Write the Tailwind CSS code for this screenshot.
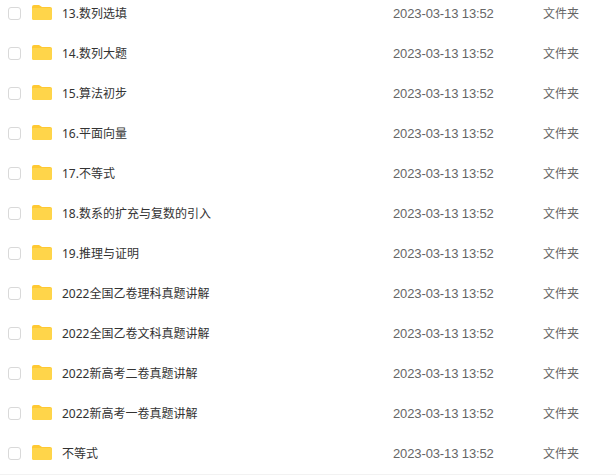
<!DOCTYPE html>
<html lang="zh">
  <head>
    <meta charset="UTF-8" />
    <title>文件列表</title>
    <script src="https://cdn.jsdelivr.net/npm/@tailwindcss/browser@4"></script>
  </head>
  <body class="bg-white overflow-hidden h-[475px] font-['Noto_Sans','Noto_Sans_CJK_SC',sans-serif]">
    <ul class="-mt-[7px] w-[616px]">
      <li class="h-10 flex items-center">
        <span class="ml-2 w-[13px] h-[13px] border border-[#d9d9d9] rounded-[3px] bg-white"></span>
        <svg class="ml-[11px] mb-px w-5 h-[15px]" viewBox="0 0 20 15"><path d="M0 2a2 2 0 0 1 2-2h5l3 2h8a2 2 0 0 1 2 2v9a2 2 0 0 1-2 2H2a2 2 0 0 1-2-2z" fill="#ffc933"/><path d="M0 4a1 1 0 0 1 1-1h17.500a1.500 1.500 0 0 1 1.500 1.500v8.500a2 2 0 0 1-2 2H2a2 2 0 0 1-2-2z" fill="#ffd54a"/></svg>
        <span class="ml-[10px] pt-px w-[331px] text-xs text-[#333]">13.数列选填</span>
        <span class="w-[150px] pt-px text-[13px] tracking-[-0.12px] text-[#666] font-['Liberation_Sans',sans-serif]">2023-03-13 13:52</span>
        <span class="pt-px text-xs text-[#666]">文件夹</span>
      </li>
      <li class="h-10 flex items-center">
        <span class="ml-2 w-[13px] h-[13px] border border-[#d9d9d9] rounded-[3px] bg-white"></span>
        <svg class="ml-[11px] mb-px w-5 h-[15px]" viewBox="0 0 20 15"><path d="M0 2a2 2 0 0 1 2-2h5l3 2h8a2 2 0 0 1 2 2v9a2 2 0 0 1-2 2H2a2 2 0 0 1-2-2z" fill="#ffc933"/><path d="M0 4a1 1 0 0 1 1-1h17.500a1.500 1.500 0 0 1 1.500 1.500v8.500a2 2 0 0 1-2 2H2a2 2 0 0 1-2-2z" fill="#ffd54a"/></svg>
        <span class="ml-[10px] pt-px w-[331px] text-xs text-[#333]">14.数列大题</span>
        <span class="w-[150px] pt-px text-[13px] tracking-[-0.12px] text-[#666] font-['Liberation_Sans',sans-serif]">2023-03-13 13:52</span>
        <span class="pt-px text-xs text-[#666]">文件夹</span>
      </li>
      <li class="h-10 flex items-center">
        <span class="ml-2 w-[13px] h-[13px] border border-[#d9d9d9] rounded-[3px] bg-white"></span>
        <svg class="ml-[11px] mb-px w-5 h-[15px]" viewBox="0 0 20 15"><path d="M0 2a2 2 0 0 1 2-2h5l3 2h8a2 2 0 0 1 2 2v9a2 2 0 0 1-2 2H2a2 2 0 0 1-2-2z" fill="#ffc933"/><path d="M0 4a1 1 0 0 1 1-1h17.500a1.500 1.500 0 0 1 1.500 1.500v8.500a2 2 0 0 1-2 2H2a2 2 0 0 1-2-2z" fill="#ffd54a"/></svg>
        <span class="ml-[10px] pt-px w-[331px] text-xs text-[#333]">15.算法初步</span>
        <span class="w-[150px] pt-px text-[13px] tracking-[-0.12px] text-[#666] font-['Liberation_Sans',sans-serif]">2023-03-13 13:52</span>
        <span class="pt-px text-xs text-[#666]">文件夹</span>
      </li>
      <li class="h-10 flex items-center">
        <span class="ml-2 w-[13px] h-[13px] border border-[#d9d9d9] rounded-[3px] bg-white"></span>
        <svg class="ml-[11px] mb-px w-5 h-[15px]" viewBox="0 0 20 15"><path d="M0 2a2 2 0 0 1 2-2h5l3 2h8a2 2 0 0 1 2 2v9a2 2 0 0 1-2 2H2a2 2 0 0 1-2-2z" fill="#ffc933"/><path d="M0 4a1 1 0 0 1 1-1h17.500a1.500 1.500 0 0 1 1.500 1.500v8.500a2 2 0 0 1-2 2H2a2 2 0 0 1-2-2z" fill="#ffd54a"/></svg>
        <span class="ml-[10px] pt-px w-[331px] text-xs text-[#333]">16.平面向量</span>
        <span class="w-[150px] pt-px text-[13px] tracking-[-0.12px] text-[#666] font-['Liberation_Sans',sans-serif]">2023-03-13 13:52</span>
        <span class="pt-px text-xs text-[#666]">文件夹</span>
      </li>
      <li class="h-10 flex items-center">
        <span class="ml-2 w-[13px] h-[13px] border border-[#d9d9d9] rounded-[3px] bg-white"></span>
        <svg class="ml-[11px] mb-px w-5 h-[15px]" viewBox="0 0 20 15"><path d="M0 2a2 2 0 0 1 2-2h5l3 2h8a2 2 0 0 1 2 2v9a2 2 0 0 1-2 2H2a2 2 0 0 1-2-2z" fill="#ffc933"/><path d="M0 4a1 1 0 0 1 1-1h17.500a1.500 1.500 0 0 1 1.500 1.500v8.500a2 2 0 0 1-2 2H2a2 2 0 0 1-2-2z" fill="#ffd54a"/></svg>
        <span class="ml-[10px] pt-px w-[331px] text-xs text-[#333]">17.不等式</span>
        <span class="w-[150px] pt-px text-[13px] tracking-[-0.12px] text-[#666] font-['Liberation_Sans',sans-serif]">2023-03-13 13:52</span>
        <span class="pt-px text-xs text-[#666]">文件夹</span>
      </li>
      <li class="h-10 flex items-center">
        <span class="ml-2 w-[13px] h-[13px] border border-[#d9d9d9] rounded-[3px] bg-white"></span>
        <svg class="ml-[11px] mb-px w-5 h-[15px]" viewBox="0 0 20 15"><path d="M0 2a2 2 0 0 1 2-2h5l3 2h8a2 2 0 0 1 2 2v9a2 2 0 0 1-2 2H2a2 2 0 0 1-2-2z" fill="#ffc933"/><path d="M0 4a1 1 0 0 1 1-1h17.500a1.500 1.500 0 0 1 1.500 1.500v8.500a2 2 0 0 1-2 2H2a2 2 0 0 1-2-2z" fill="#ffd54a"/></svg>
        <span class="ml-[10px] pt-px w-[331px] text-xs text-[#333]">18.数系的扩充与复数的引入</span>
        <span class="w-[150px] pt-px text-[13px] tracking-[-0.12px] text-[#666] font-['Liberation_Sans',sans-serif]">2023-03-13 13:52</span>
        <span class="pt-px text-xs text-[#666]">文件夹</span>
      </li>
      <li class="h-10 flex items-center">
        <span class="ml-2 w-[13px] h-[13px] border border-[#d9d9d9] rounded-[3px] bg-white"></span>
        <svg class="ml-[11px] mb-px w-5 h-[15px]" viewBox="0 0 20 15"><path d="M0 2a2 2 0 0 1 2-2h5l3 2h8a2 2 0 0 1 2 2v9a2 2 0 0 1-2 2H2a2 2 0 0 1-2-2z" fill="#ffc933"/><path d="M0 4a1 1 0 0 1 1-1h17.500a1.500 1.500 0 0 1 1.500 1.500v8.500a2 2 0 0 1-2 2H2a2 2 0 0 1-2-2z" fill="#ffd54a"/></svg>
        <span class="ml-[10px] pt-px w-[331px] text-xs text-[#333]">19.推理与证明</span>
        <span class="w-[150px] pt-px text-[13px] tracking-[-0.12px] text-[#666] font-['Liberation_Sans',sans-serif]">2023-03-13 13:52</span>
        <span class="pt-px text-xs text-[#666]">文件夹</span>
      </li>
      <li class="h-10 flex items-center">
        <span class="ml-2 w-[13px] h-[13px] border border-[#d9d9d9] rounded-[3px] bg-white"></span>
        <svg class="ml-[11px] mb-px w-5 h-[15px]" viewBox="0 0 20 15"><path d="M0 2a2 2 0 0 1 2-2h5l3 2h8a2 2 0 0 1 2 2v9a2 2 0 0 1-2 2H2a2 2 0 0 1-2-2z" fill="#ffc933"/><path d="M0 4a1 1 0 0 1 1-1h17.500a1.500 1.500 0 0 1 1.500 1.500v8.500a2 2 0 0 1-2 2H2a2 2 0 0 1-2-2z" fill="#ffd54a"/></svg>
        <span class="ml-[10px] pt-px w-[331px] text-xs text-[#333]">2022全国乙卷理科真题讲解</span>
        <span class="w-[150px] pt-px text-[13px] tracking-[-0.12px] text-[#666] font-['Liberation_Sans',sans-serif]">2023-03-13 13:52</span>
        <span class="pt-px text-xs text-[#666]">文件夹</span>
      </li>
      <li class="h-10 flex items-center">
        <span class="ml-2 w-[13px] h-[13px] border border-[#d9d9d9] rounded-[3px] bg-white"></span>
        <svg class="ml-[11px] mb-px w-5 h-[15px]" viewBox="0 0 20 15"><path d="M0 2a2 2 0 0 1 2-2h5l3 2h8a2 2 0 0 1 2 2v9a2 2 0 0 1-2 2H2a2 2 0 0 1-2-2z" fill="#ffc933"/><path d="M0 4a1 1 0 0 1 1-1h17.500a1.500 1.500 0 0 1 1.500 1.500v8.500a2 2 0 0 1-2 2H2a2 2 0 0 1-2-2z" fill="#ffd54a"/></svg>
        <span class="ml-[10px] pt-px w-[331px] text-xs text-[#333]">2022全国乙卷文科真题讲解</span>
        <span class="w-[150px] pt-px text-[13px] tracking-[-0.12px] text-[#666] font-['Liberation_Sans',sans-serif]">2023-03-13 13:52</span>
        <span class="pt-px text-xs text-[#666]">文件夹</span>
      </li>
      <li class="h-10 flex items-center">
        <span class="ml-2 w-[13px] h-[13px] border border-[#d9d9d9] rounded-[3px] bg-white"></span>
        <svg class="ml-[11px] mb-px w-5 h-[15px]" viewBox="0 0 20 15"><path d="M0 2a2 2 0 0 1 2-2h5l3 2h8a2 2 0 0 1 2 2v9a2 2 0 0 1-2 2H2a2 2 0 0 1-2-2z" fill="#ffc933"/><path d="M0 4a1 1 0 0 1 1-1h17.500a1.500 1.500 0 0 1 1.500 1.500v8.500a2 2 0 0 1-2 2H2a2 2 0 0 1-2-2z" fill="#ffd54a"/></svg>
        <span class="ml-[10px] pt-px w-[331px] text-xs text-[#333]">2022新高考二卷真题讲解</span>
        <span class="w-[150px] pt-px text-[13px] tracking-[-0.12px] text-[#666] font-['Liberation_Sans',sans-serif]">2023-03-13 13:52</span>
        <span class="pt-px text-xs text-[#666]">文件夹</span>
      </li>
      <li class="h-10 flex items-center">
        <span class="ml-2 w-[13px] h-[13px] border border-[#d9d9d9] rounded-[3px] bg-white"></span>
        <svg class="ml-[11px] mb-px w-5 h-[15px]" viewBox="0 0 20 15"><path d="M0 2a2 2 0 0 1 2-2h5l3 2h8a2 2 0 0 1 2 2v9a2 2 0 0 1-2 2H2a2 2 0 0 1-2-2z" fill="#ffc933"/><path d="M0 4a1 1 0 0 1 1-1h17.500a1.500 1.500 0 0 1 1.500 1.500v8.500a2 2 0 0 1-2 2H2a2 2 0 0 1-2-2z" fill="#ffd54a"/></svg>
        <span class="ml-[10px] pt-px w-[331px] text-xs text-[#333]">2022新高考一卷真题讲解</span>
        <span class="w-[150px] pt-px text-[13px] tracking-[-0.12px] text-[#666] font-['Liberation_Sans',sans-serif]">2023-03-13 13:52</span>
        <span class="pt-px text-xs text-[#666]">文件夹</span>
      </li>
      <li class="h-10 flex items-center">
        <span class="ml-2 w-[13px] h-[13px] border border-[#d9d9d9] rounded-[3px] bg-white"></span>
        <svg class="ml-[11px] mb-px w-5 h-[15px]" viewBox="0 0 20 15"><path d="M0 2a2 2 0 0 1 2-2h5l3 2h8a2 2 0 0 1 2 2v9a2 2 0 0 1-2 2H2a2 2 0 0 1-2-2z" fill="#ffc933"/><path d="M0 4a1 1 0 0 1 1-1h17.500a1.500 1.500 0 0 1 1.500 1.500v8.500a2 2 0 0 1-2 2H2a2 2 0 0 1-2-2z" fill="#ffd54a"/></svg>
        <span class="ml-[10px] pt-px w-[331px] text-xs text-[#333]">不等式</span>
        <span class="w-[150px] pt-px text-[13px] tracking-[-0.12px] text-[#666] font-['Liberation_Sans',sans-serif]">2023-03-13 13:52</span>
        <span class="pt-px text-xs text-[#666]">文件夹</span>
      </li>
    </ul>
    <div class="mt-[1px] h-px w-full bg-[#f2f2f2]"></div>
  </body>
</html>
